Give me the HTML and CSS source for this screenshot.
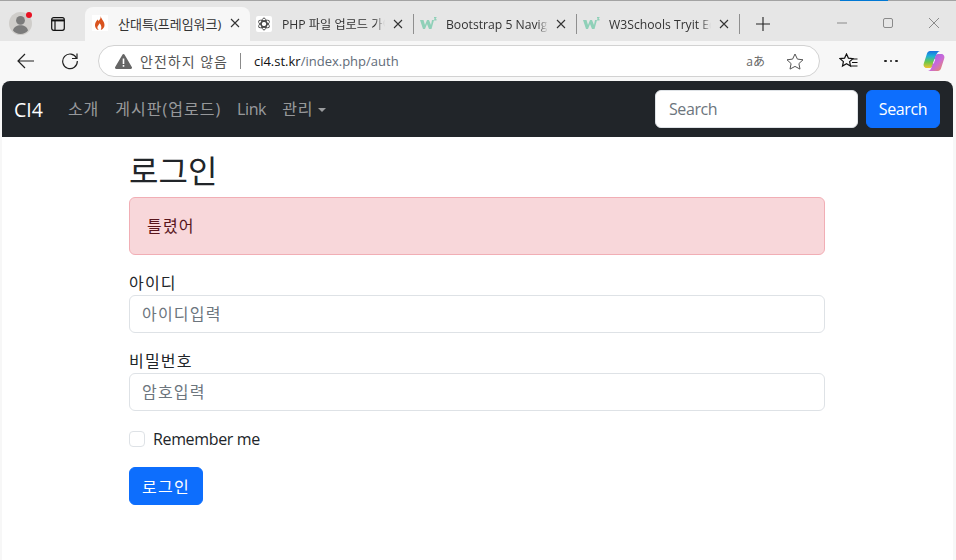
FILE: index.html
```html
<!DOCTYPE html>
<html lang="ko">
<head>
<meta charset="utf-8">
<title>산대특(프레임워크)</title>
<link rel="stylesheet" href="styles.css">
</head>
<body>
<div class="loadline"><span class="loadline-blue"></span></div>
<div class="tabstrip">
  <div class="profile">
    <svg width="23" height="23" viewBox="0 0 26 26"><circle cx="13" cy="13" r="13" fill="#cfcdca"/><circle cx="13" cy="9.500" r="5" fill="#7b7b7b"/><path d="M4.500 21c1-4.500 4.500-6 8.500-6s7.500 1.500 8.500 6c-2 2.500-5 4-8.500 4s-6.500-1.500-8.500-4z" fill="#7b7b7b"/></svg>
    <span class="profile-dot"></span>
  </div>
  <div class="tabs-btn">
    <svg width="14" height="14" viewBox="0 0 14 14" fill="none" stroke="#111" stroke-width="1.200"><rect x=".7" y=".7" width="12.600" height="12.600" rx="2"/><path d="M.7 3.400h12.600" stroke-width="2"/><path d="M4 4v9"/></svg>
  </div>
  <div class="tab tab-active">
    <svg class="favicon" width="16" height="16" viewBox="0 0 16 16"><rect width="16" height="16" fill="#fff"/><path d="M8.500 1c.6 2.500-1 3.500-2 5-.3-.8-.5-1.200-1-1.600C4 6.500 3 8 3 10c0 2.700 2 5 3.700 5-1-.8-1.500-2-1.200-3.200.3-1.300 1.500-2 2-3.600 1.500 1.500 2.600 3.500 1.300 6.800 2.200-.7 3.700-2.700 3.700-5 0-3.800-3-5.500-4-9z" fill="#d9531e"/></svg>
    <span class="tab-title tab-title-ko">산대특(프레임워크)</span>
    <svg class="tab-x" width="10" height="10" viewBox="0 0 10 10"><path d="M1 1l8 8M9 1l-8 8" stroke="#333" stroke-width="1.100"/></svg>
  </div>
  <div class="tab tab-gpt">
    <svg class="favicon" width="16" height="16" viewBox="0 0 16 16" fill="none" stroke="#444" stroke-width=".9"><rect width="16" height="16" rx="2" fill="#fff" stroke="none"/><g transform="translate(8 8)"><ellipse rx="2.600" ry="6"/><ellipse rx="2.600" ry="6" transform="rotate(60)"/><ellipse rx="2.600" ry="6" transform="rotate(120)"/><circle r="3.200"/></g></svg>
    <span class="tab-title tab-fade">PHP 파일 업로드 가이드</span>
    <svg class="tab-x" width="10" height="10" viewBox="0 0 10 10"><path d="M1 1l8 8M9 1l-8 8" stroke="#333" stroke-width="1.100"/></svg>
  </div>
  <div class="tab tab-w3">
    <svg class="favicon" width="17" height="16" viewBox="0 0 17 16"><path d="M0 4h3.500l1.500 5 2-5h2l2 5 1-5h2l-2.500 9h-2.500l-2-5-2 5H3z" fill="#8fd0b8"/><path d="M14 1h2.500v.8L15.500 3h1v1.500H14v-.8L15 2.500h-1z" fill="#8fd0b8"/></svg>
    <span class="tab-title tab-fade">Bootstrap 5 Navigation</span>
    <svg class="tab-x" width="10" height="10" viewBox="0 0 10 10"><path d="M1 1l8 8M9 1l-8 8" stroke="#333" stroke-width="1.100"/></svg>
  </div>
  <div class="tab tab-w3">
    <svg class="favicon" width="17" height="16" viewBox="0 0 17 16"><path d="M0 4h3.500l1.500 5 2-5h2l2 5 1-5h2l-2.500 9h-2.500l-2-5-2 5H3z" fill="#8fd0b8"/><path d="M14 1h2.500v.8L15.500 3h1v1.500H14v-.8L15 2.500h-1z" fill="#8fd0b8"/></svg>
    <span class="tab-title tab-fade">W3Schools Tryit Editor</span>
    <svg class="tab-x" width="10" height="10" viewBox="0 0 10 10"><path d="M1 1l8 8M9 1l-8 8" stroke="#333" stroke-width="1.100"/></svg>
  </div>
  <div class="newtab">
    <svg width="14" height="14" viewBox="0 0 14 14"><path d="M7 0v14M0 7h14" stroke="#222" stroke-width="1.100"/></svg>
  </div>
  <div class="winctl">
    <svg width="10" height="10" viewBox="0 0 10 10"><path d="M0 5h10" stroke="#8a8a8a"/></svg>
    <svg width="10" height="10" viewBox="0 0 10 10"><rect x=".5" y=".5" width="9" height="9" rx="1.500" fill="none" stroke="#8a8a8a"/></svg>
    <svg width="10" height="10" viewBox="0 0 10 10"><path d="M0 0l10 10M10 0L0 10" stroke="#8a8a8a"/></svg>
  </div>
</div>
<div class="toolbar">
  <svg class="tool-back" width="18" height="16" viewBox="0 0 18 16" fill="none" stroke="#222" stroke-width="1.200"><path d="M17 8H1M8 1L1 8l7 7"/></svg>
  <svg class="tool-reload" width="18" height="18" viewBox="0 0 18 18" fill="none" stroke="#222" stroke-width="1.200"><path d="M15.600 6.200A7.300 7.300 0 1 0 16.300 9"/><path d="M16 1.500v5h-5"/></svg>
  <div class="omnibox">
    <svg class="warn" width="17" height="15" viewBox="0 0 17 15"><path d="M8.500 0a1.300 1.300 0 0 1 1.100.7l7.200 12.300a1.300 1.300 0 0 1-1.100 2H1.300a1.300 1.300 0 0 1-1.100-2L7.400.7A1.300 1.300 0 0 1 8.500 0z" fill="#666"/><path d="M7.700 4.500h1.600v5.500H7.700zM7.700 11h1.600v1.700H7.700z" fill="#fff"/></svg>
    <span class="insecure">안전하지 않음</span>
    <span class="omni-sep"></span>
    <span class="url"><span class="url-host">ci4.st.kr</span>/index.php/auth</span>
    <span class="translate">aあ</span>
    <svg class="omni-star" width="18" height="17" viewBox="0 0 18 17" fill="none" stroke="#555" stroke-width="1"><path d="M9 1l2.400 5.100 5.600.7-4.100 3.800 1.100 5.500L9 13.400l-5 2.700 1.100-5.500L1 6.800l5.600-.7z"/></svg>
  </div>
  <svg class="tool-fav" width="20" height="17" viewBox="0 0 20 17" fill="none" stroke="#111" stroke-width="1.200"><path d="M7.500 1l1.900 4.100 4.500.5-3.300 3 .9 4.400-4-2.200-4 2.200.9-4.400-3.300-3 4.500-.5z"/><path d="M13.500 6h5M13 9.500h5.500M11.500 13h7"/></svg>
  <span class="tool-more"><i></i><i></i><i></i></span>
  <svg class="tool-copilot" width="22" height="22" viewBox="0 0 22 22"><defs><linearGradient id="cp1" x1="0" y1="0" x2="0" y2="1"><stop offset="0" stop-color="#1a6fe0"/><stop offset=".3" stop-color="#1cb0d8"/><stop offset=".65" stop-color="#6cc84a"/><stop offset="1" stop-color="#f2c230"/></linearGradient><linearGradient id="cp2" x1="0" y1="0" x2="1" y2="1"><stop offset="0" stop-color="#9a5be8"/><stop offset=".55" stop-color="#c96ad8"/><stop offset="1" stop-color="#f0904a"/></linearGradient></defs><path d="M7 1H17C15 1.500 14 3 13.500 4.500L9.500 16C9 17.500 8 18 6 18H3.500C1.300 18 0 15.500 .8 13.500L4 3.500C4.500 2 5.700 1 7 1z" fill="url(#cp1)"/><path d="M15 21H5C7 20.500 8 19 8.500 17.500L12.500 6C13 4.500 14 4 16 4H18.500C20.700 4 22 6.500 21.200 8.500L18 18.500C17.500 20 16.300 21 15 21z" fill="url(#cp2)"/><path d="M11.200 9.500L9.800 14 11 13 12.300 9z" fill="#fff"/></svg>
</div>
<div class="page">
  <nav class="navbar">
    <a class="brand">CI4</a>
    <ul class="nav-links">
      <li class="nav-ko">소개</li>
      <li class="nav-ko">게시판(업로드)</li>
      <li>Link</li>
      <li class="dropdown"><span class="nav-ko">관리</span><span class="caret"></span></li>
    </ul>
    <form class="nav-search">
      <input class="nav-input" type="text" placeholder="Search">
      <button class="btn btn-primary" type="button">Search</button>
    </form>
  </nav>
  <main class="container">
    <h2 class="title">로그인</h2>
    <div class="alert ko">틀렸어</div>
    <div class="field">
      <label class="label ko">아이디</label>
      <input class="input" type="text" placeholder="아이디입력">
    </div>
    <div class="field">
      <label class="label ko">비밀번호</label>
      <input class="input" type="password" placeholder="암호입력">
    </div>
    <div class="check">
      <span class="checkbox"></span>
      <span class="check-label">Remember me</span>
    </div>
    <button class="btn btn-primary btn-login ko" type="button">로그인</button>
  </main>
</div>
</body>
</html>
```
FILE: styles.css
```css
* { box-sizing: border-box; }
html, body { margin: 0; padding: 0; }
body {
  width: 956px;
  height: 560px;
  overflow: hidden;
  background: #f7f7f7;
  font-family: "Open Sans", "Noto Sans CJK KR", sans-serif;
  color: #212529;
}
.ko { letter-spacing: 1.2px; font-size: 16px; }
.nav-ko { letter-spacing: 1px; font-size: 16px; }
.loadline { height: 1px; background: #a3a3a3; padding-left: 840px; }
.loadline-blue { display: block; width: 48px; height: 1px; background: #0078d4; }

.tabstrip {
  display: flex;
  height: 40px;
  background: #e6e6e6;
  align-items: flex-end;
}
.profile { position: relative; width: 23px; height: 23px; margin: 0 0 6px 9px; flex: none; }
.profile svg { display: block; }
.profile-dot {
  position: absolute; top: 0; right: 0;
  width: 6px; height: 6px; border-radius: 50%;
  background: #e81123;
}
.tabs-btn { width: 14px; height: 14px; margin: 0 0 10px 19px; flex: none; }
.tabs-btn svg { display: block; }
.tab {
  display: flex;
  align-items: center;
  height: 34px;
  flex: none;
  font-size: 12.2px;
  color: #333;
  padding-bottom: 2px;
}
.favicon { flex: none; }
.tab-title { overflow: hidden; white-space: nowrap; flex: 1; min-width: 0; }
.tab-title-ko { font-size: 13px; }
.tab-fade { -webkit-mask-image: linear-gradient(to right, #000 90%, transparent 100%); mask-image: linear-gradient(to right, #000 90%, transparent 100%); }
.tab-x { flex: none; }
.tab-active {
  width: 165px;
  margin-left: 20px;
  padding-left: 7px;
  background: #f7f7f7;
  border-radius: 8px 8px 0 0;
}
.tab-active .favicon { margin-right: 10px; }
.tab-active .tab-x { margin: 0 10px 0 8px; }
.tab-gpt { width: 164px; padding-left: 6px; border-right: 1px solid #8f8f8f; height: 20px; margin-bottom: 7px; padding-bottom: 0; }
.tab-gpt .favicon { margin-right: 10px; }
.tab-gpt .tab-x { margin: 0 10px 0 8px; }
.tab-w3 { width: 163px; padding-left: 6px; border-right: 1px solid #8f8f8f; height: 20px; margin-bottom: 7px; padding-bottom: 0; }
.tab-w3 .favicon { margin-right: 9px; }
.tab-w3 .tab-x { margin: 0 10px 0 8px; }
.newtab { width: 14px; height: 14px; margin: 0 0 10px 16px; flex: none; }
.newtab svg { display: block; }
.winctl { display: flex; gap: 36px; margin: 0 0 13px 67px; flex: none; }
.winctl svg { display: block; }

.toolbar {
  display: flex;
  align-items: center;
  height: 40px;
  background: #f7f7f7;
}
.tool-back { margin-left: 17px; flex: none; }
.tool-reload { margin-left: 26px; flex: none; }
.omnibox {
  display: flex;
  align-items: center;
  width: 722px;
  height: 32px;
  margin-left: 19px;
  background: #fff;
  border: 1px solid #d2d2d2;
  border-radius: 16px;
  flex: none;
}
.warn { margin-left: 16px; flex: none; }
.insecure { margin-left: 8px; color: #555; font-size: 14px; letter-spacing: 1px; }
.omni-sep { width: 1px; height: 16px; background: #8a8a8a; margin: 0 13px 0 12px; }
.url { color: #5f6b78; font-size: 13px; }
.url-host { color: #111; }
.translate { margin-left: auto; color: #666; font-size: 12px; }
.omni-star { margin: 0 15px 0 21px; flex: none; }
.tool-fav { margin-left: 19px; flex: none; }
.tool-more { display: flex; gap: 3px; margin-left: 25px; flex: none; }
.tool-more i { display: block; width: 2.500px; height: 2.500px; border-radius: 50%; background: #222; }
.tool-copilot { margin-left: 25px; flex: none; }

.page {
  width: 951px;
  height: 479px;
  margin-left: 2px;
  background: #fff;
  border-radius: 8px 8px 0 0;
  overflow: hidden;
}
.navbar {
  display: flex;
  align-items: center;
  height: 56px;
  padding: 0 13px 0 12px;
  background: #212529;
}
.brand { font-size: 19.5px; color: #fff; margin-right: 25px; }
.nav-links {
  display: flex;
  gap: 16px;
  margin: 0;
  padding: 0;
  list-style: none;
  font-size: 16px;
  letter-spacing: -.4px;
  line-height: 24px;
  color: rgba(255,255,255,.55);
}
.caret {
  display: inline-block;
  margin-left: 4px;
  vertical-align: 3px;
  border-top: 4px solid;
  border-left: 4px solid transparent;
  border-right: 4px solid transparent;
}
.nav-search { display: flex; gap: 8px; margin: 0 0 0 auto; }
.nav-input {
  width: 203px;
  height: 38px;
  padding: 0 13px;
  border: 1px solid #dee2e6;
  border-radius: 6px;
  background: #fff;
  font: inherit;
  font-size: 16px;
  letter-spacing: -.4px;
}
.btn {
  height: 38px;
  width: 74px;
  padding: 0;
  border: 1px solid #0d6efd;
  border-radius: 6px;
  font: inherit;
  font-size: 16px;
  letter-spacing: -.4px;
  color: #fff;
}
.btn.ko { font-size: 16px; letter-spacing: 1.2px; padding: 0 0 1px; }
.btn-primary { background: #0d6efd; }
input::placeholder { color: #6c757d; opacity: 1; }

.container { width: 696px; margin-left: 127px; }
.title { margin: 15px 0 7px; height: 38px; font-size: 32px; font-weight: 400; line-height: 38px; }
.alert {
  height: 58px;
  padding: 0 17px 2px;
  margin-bottom: 16px;
  display: flex;
  align-items: center;
  background: #f8d7da;
  border: 1px solid #f1aeb5;
  border-radius: 6px;
  color: #58151c;
}
.field { margin-bottom: 16px; }
.label { display: block; line-height: 24px; }
.input {
  display: block;
  width: 100%;
  height: 38px;
  padding: 0 12px 1px;
  border: 1px solid #dee2e6;
  border-radius: 6px;
  background: #fff;
  font: inherit;
  font-size: 16px;
  letter-spacing: 1.2px;
}
.check { display: flex; align-items: center; gap: 8px; height: 24px; margin: 16px 0; }
.check-label { font-size: 16px; letter-spacing: -.35px; padding-bottom: 1px; }
.checkbox { width: 16px; height: 16px; border: 1px solid #dee2e6; border-radius: 4px; background: #fff; flex: none; }
.btn-login { display: block; }
```
